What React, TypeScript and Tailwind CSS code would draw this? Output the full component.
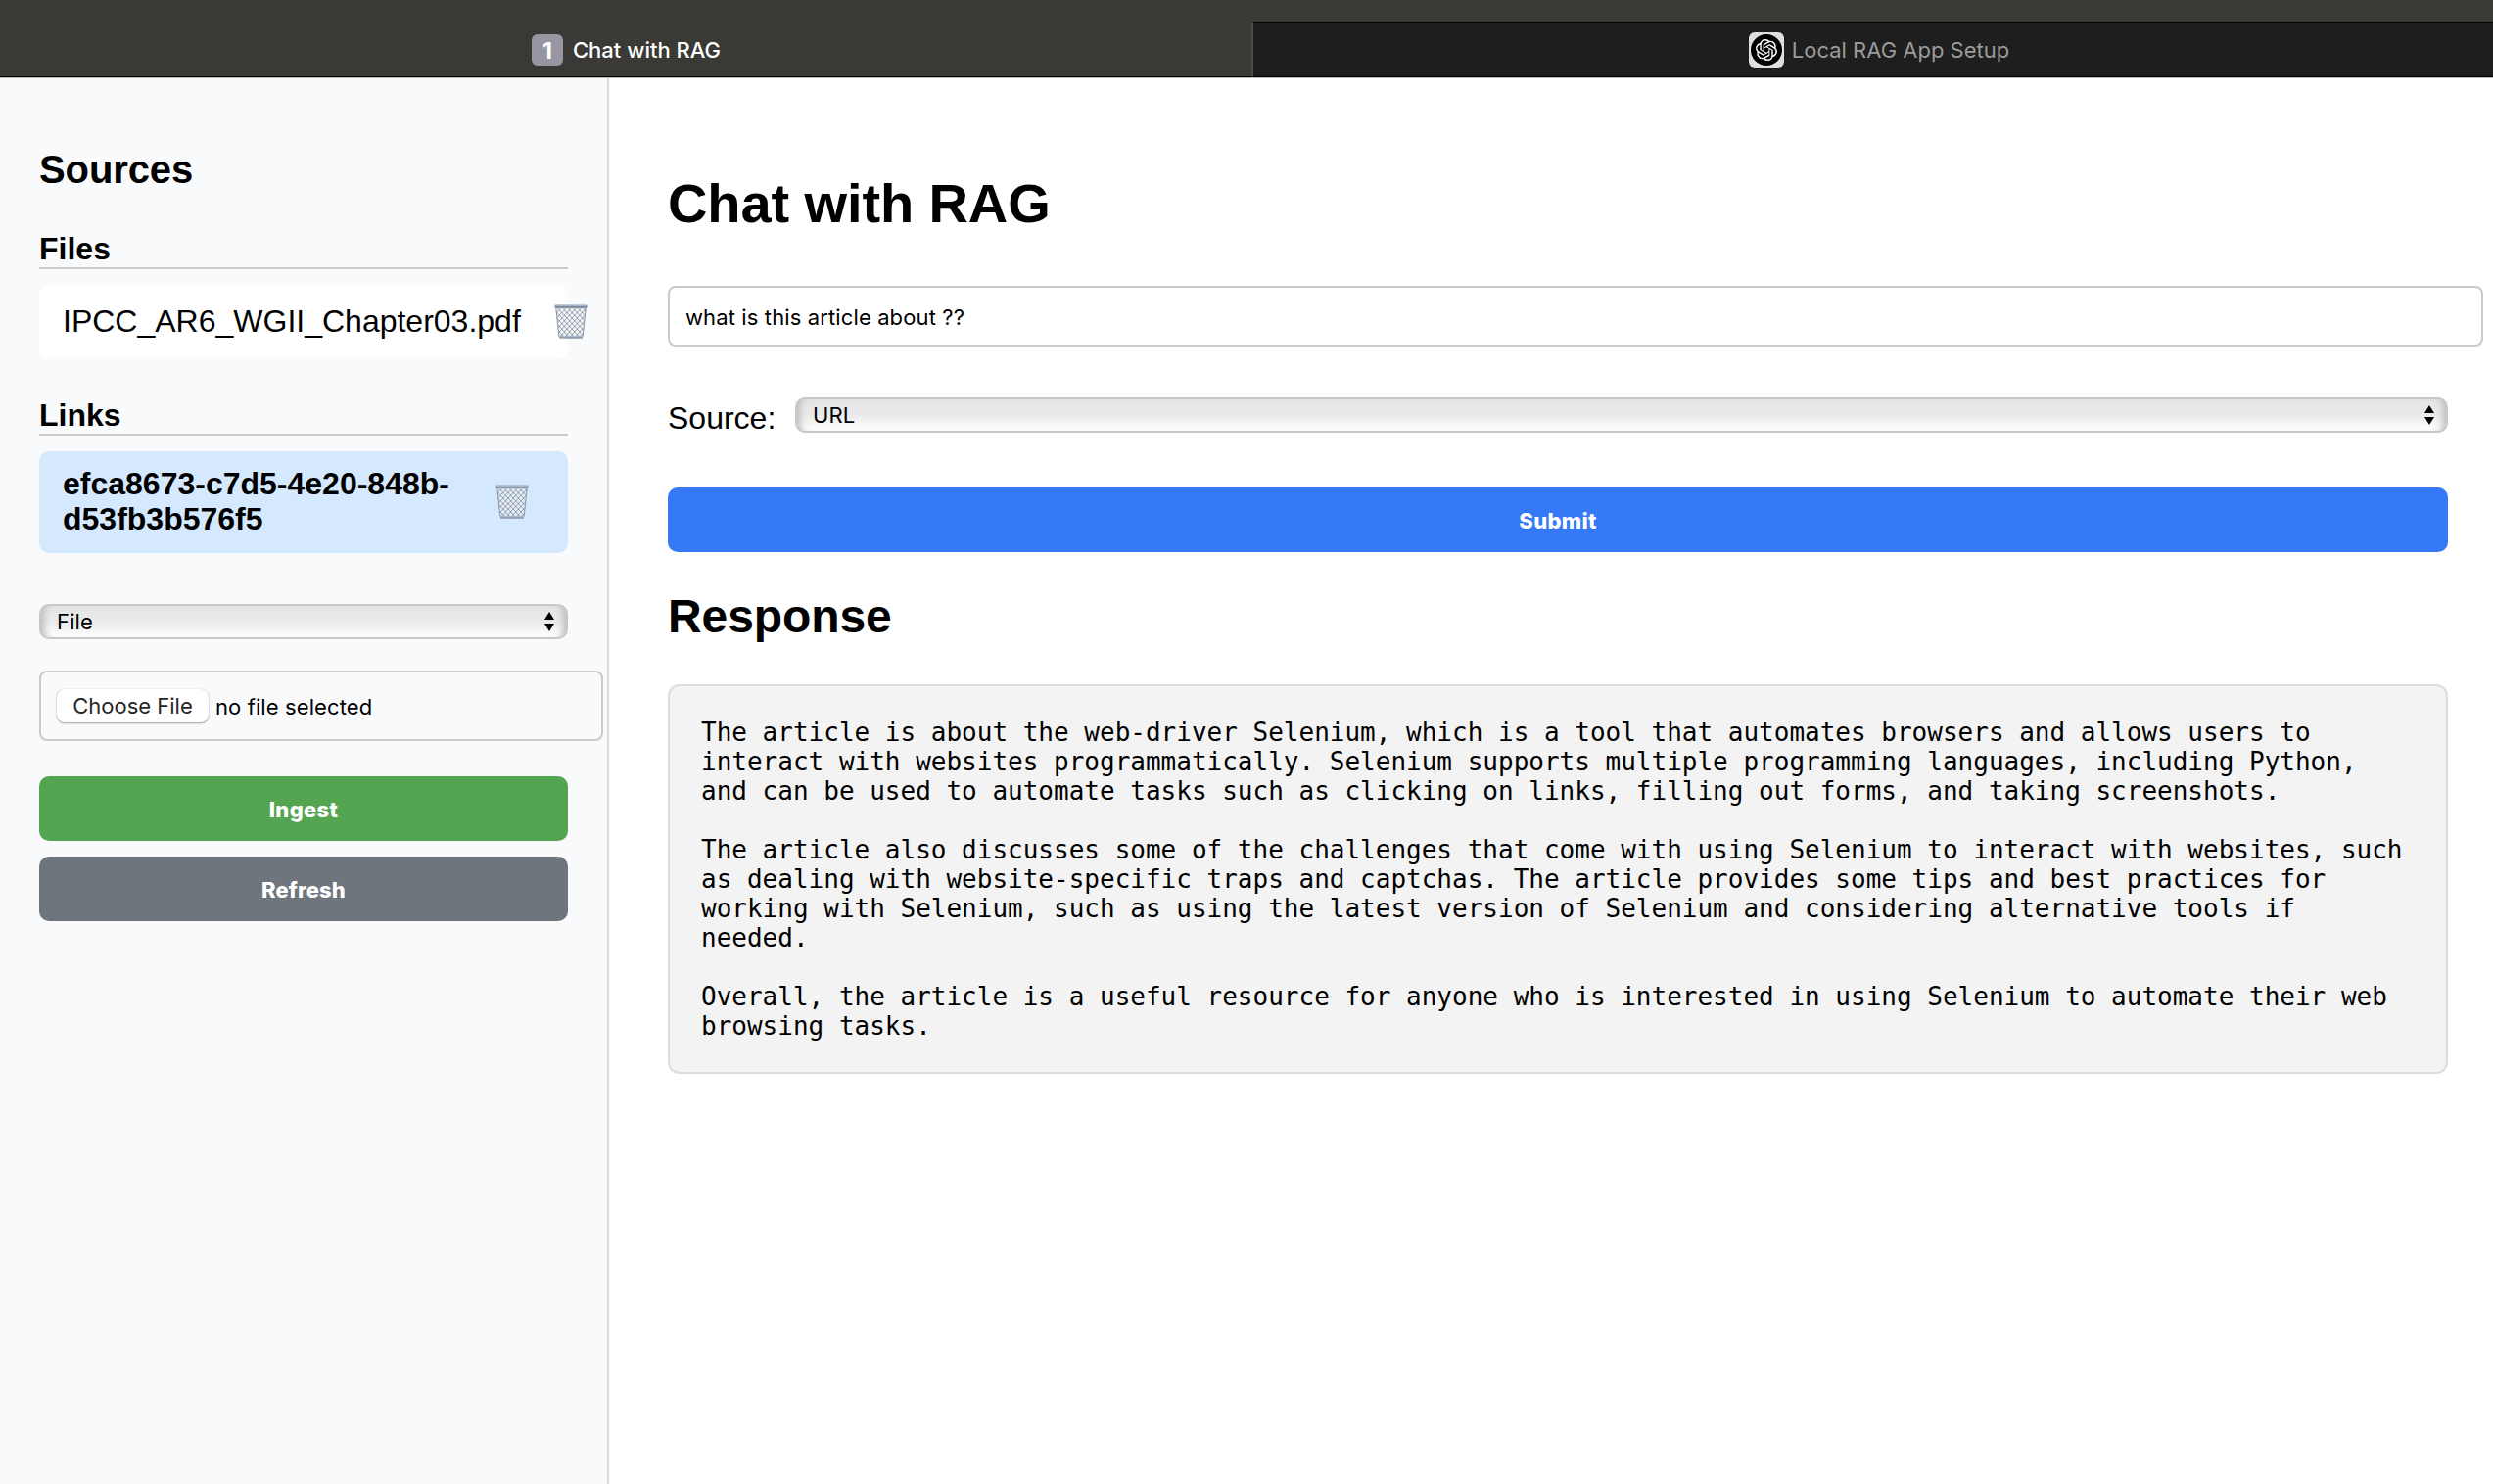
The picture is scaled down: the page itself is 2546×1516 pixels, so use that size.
import type { ReactNode } from 'react';

const RESPONSE = [
  'The article is about the web-driver Selenium, which is a tool that automates browsers and allows users to interact with websites programmatically. Selenium supports multiple programming languages, including Python, and can be used to automate tasks such as clicking on links, filling out forms, and taking screenshots.',
  'The article also discusses some of the challenges that come with using Selenium to interact with websites, such as dealing with website-specific traps and captchas. The article provides some tips and best practices for working with Selenium, such as using the latest version of Selenium and considering alternative tools if needed.',
  'Overall, the article is a useful resource for anyone who is interested in using Selenium to automate their web browsing tasks.',
].join('\n\n');

function OpenAiLogo() {
  return (
    <span className="flex size-9 items-center justify-center rounded-md bg-[#dfdfdf]">
      <span className="flex size-8 items-center justify-center rounded-full bg-black">
        <svg viewBox="0 0 24 24" className="size-[22px] fill-white">
          <path d="M22.2819 9.8211a5.9847 5.9847 0 0 0-.5157-4.9108 6.0462 6.0462 0 0 0-6.5098-2.9A6.0651 6.0651 0 0 0 4.9807 4.1818a5.9847 5.9847 0 0 0-3.9977 2.9 6.0462 6.0462 0 0 0 .7427 7.0966 5.98 5.98 0 0 0 .511 4.9107 6.051 6.051 0 0 0 6.5146 2.9001A5.9847 5.9847 0 0 0 13.2599 24a6.0557 6.0557 0 0 0 5.7718-4.2058 5.9894 5.9894 0 0 0 3.9977-2.9001 6.0557 6.0557 0 0 0-.7475-7.0729zm-9.022 12.6081a4.4755 4.4755 0 0 1-2.8764-1.0408l.1419-.0804 4.7783-2.7582a.7948.7948 0 0 0 .3927-.6813v-6.7369l2.02 1.1686a.071.071 0 0 1 .038.052v5.5826a4.504 4.504 0 0 1-4.4945 4.4944zm-9.6607-4.1254a4.4708 4.4708 0 0 1-.5346-3.0137l.142.0852 4.783 2.7582a.7712.7712 0 0 0 .7806 0l5.8428-3.3685v2.3324a.0804.0804 0 0 1-.0332.0615L9.74 19.9502a4.4992 4.4992 0 0 1-6.1408-1.6464zM2.3408 7.8956a4.485 4.485 0 0 1 2.3655-1.9728V11.6a.7664.7664 0 0 0 .3879.6765l5.8144 3.3543-2.0201 1.1685a.0757.0757 0 0 1-.071 0l-4.8303-2.7865A4.504 4.504 0 0 1 2.3408 7.872zm16.5963 3.8558L13.1038 8.364 15.1192 7.2a.0757.0757 0 0 1 .071 0l4.8303 2.7913a4.4944 4.4944 0 0 1-.6765 8.1042v-5.6772a.79.79 0 0 0-.407-.667zm2.0107-3.0231l-.142-.0852-4.7735-2.7818a.7759.7759 0 0 0-.7854 0L9.409 9.2297V6.8974a.0662.0662 0 0 1 .0284-.0615l4.8303-2.7866a4.4992 4.4992 0 0 1 6.6802 4.66zM8.3065 12.863l-2.02-1.1638a.0804.0804 0 0 1-.038-.0567V6.0742a4.4992 4.4992 0 0 1 7.3757-3.4537l-.142.0805L8.704 5.459a.7948.7948 0 0 0-.3927.6813zm1.0976-2.3654l2.602-1.4998 2.6069 1.4998v2.9994l-2.5974 1.4997-2.6067-1.4997Z" />
        </svg>
      </span>
    </span>
  );
}

function WireBasket() {
  return (
    <svg viewBox="0 0 34 35" className="h-[35px] w-[34px]" fill="none">
      <defs>
        <pattern id="mesh" width="5.2" height="5.6" patternUnits="userSpaceOnUse">
          <path d="M0 0L5.2 5.600M5.2 0L0 5.600" stroke="#89919b" strokeWidth="0.85" />
        </pattern>
      </defs>
      <path d="M1.2 2.5h31.6L29 33.5H5z" fill="#eef2f7" fillOpacity="0.6" />
      <path d="M1.2 2.5h31.6L29 33.5H5z" fill="url(#mesh)" />
      <path d="M1.8 3.5L4.8 32.5M32.2 3.5L29.2 32.5" stroke="#8d96a1" strokeWidth="1" />
      <path d="M4.6 31.2c6 .9 18.800 .9 24.800 0l-.5 2.900c-5 .8-18.800 .8-23.800 0z" fill="#a9b9cd" />
      <path d="M5 34h24" stroke="#7b8491" strokeWidth="1" />
      <rect x="0.3" y="0.6" width="33.400" height="2.800" rx="1.2" fill="#8a9db2" />
      <path d="M1 1.2h32" stroke="#b9c9da" strokeWidth="0.8" />
      <path d="M1 3.100h32" stroke="#626c78" strokeWidth="0.8" />
    </svg>
  );
}

function SourceItem({ name, selected = false }: { name: string; selected?: boolean }) {
  return (
    <div
      className={
        selected
          ? 'mt-4 flex h-[104px] items-center justify-between rounded-[10px] bg-[#d5e9fe] px-6 font-bold'
          : 'mt-4 flex h-[76px] items-center justify-between rounded-[10px] bg-white px-6'
      }
    >
      <span className="pb-0.5 text-[32px] leading-9">{name}</span>
      <button className="ml-4 shrink-0 pr-4 pb-px pl-[18px]" aria-label="Delete">
        <WireBasket />
      </button>
    </div>
  );
}

function GroupHeading({ children }: { children: ReactNode }) {
  return (
    <h3 className="h-[39px] border-b-2 border-[#cacacc] text-[32px] leading-9 font-bold">{children}</h3>
  );
}

function Select({ value }: { value: string }) {
  return (
    <div className="flex h-9 flex-1 rounded-[10px] border-2 border-[#c8c8c8] bg-linear-to-b from-[#e5e5e5] via-[#eaeaea] to-white">
      <div className="flex flex-1 items-center justify-between rounded-lg pr-3 pl-4 shadow-[inset_9px_0_7px_-6px_#bdbdbd,inset_-9px_0_7px_-6px_#bdbdbd] font-['Inter',sans-serif] text-[22px] leading-7 tracking-[0.15px]">
        <span>{value}</span>
        <svg viewBox="0 0 10 20" className="h-5 w-2.5 fill-black">
          <path d="M5 0l5 8H0zM5 20l5-8H0z" />
        </svg>
      </div>
    </div>
  );
}

export default function App() {
  return (
    <div className="flex h-[1516px] w-[2546px] flex-col overflow-hidden bg-white font-['Liberation_Sans',sans-serif] text-black">
      <header className="flex h-20 border-b border-[#bdbdbd] bg-[#3a3936] font-['Inter',sans-serif] text-[22px] leading-7">
        <div className="flex w-[1278px] items-center justify-center gap-2.5 border-b border-black pt-6 pl-px">
          <span className="flex size-8 items-center justify-center rounded-md bg-[#9796a2] pt-px text-[23px] font-bold text-white">1</span>
          <span className="font-medium text-white">Chat with RAG</span>
        </div>
        <div className="mt-[22px] flex flex-1 items-center justify-center gap-2 border-y border-l-2 border-y-black border-l-[#4b4b4a] bg-[#1e1e1e] pt-px pl-3">
          <OpenAiLogo />
          <span className="text-[#9b9b9b]">Local RAG App Setup</span>
        </div>
      </header>

      <div className="flex flex-1">
        <aside className="flex w-[622px] shrink-0 flex-col border-r-2 border-[#dcdcde] bg-[#f9fafc] pt-[70px] pr-10 pl-10">
          <h2 className="text-[40px] leading-[46px] font-bold tracking-[-0.1px]">Sources</h2>

          <section className="mt-10">
            <GroupHeading>Files</GroupHeading>
            <SourceItem name="IPCC_AR6_WGII_Chapter03.pdf" />
          </section>

          <section className="mt-[39px]">
            <GroupHeading>Links</GroupHeading>
            <SourceItem name="efca8673-c7d5-4e20-848b-d53fb3b576f5" selected />
          </section>

          <div className="mt-[52px] flex">
            <Select value="File" />
          </div>

          <div className="mt-8 flex h-[72px] w-[576px] items-center gap-[7px] rounded-lg border-2 border-[#cacacc] pl-4 font-['Inter',sans-serif] text-[22px] leading-7">
            <button className="h-[34px] w-[155px] rounded-lg bg-white text-[#262626] shadow-[0_1px_2px_rgba(0,0,0,0.35),0_0_1px_rgba(0,0,0,0.25)]">
              Choose File
            </button>
            <span className="pt-0.5 tracking-[0.1px]">no file selected</span>
          </div>

          <button className="mt-9 h-[66px] rounded-[10px] bg-[#54a551] pt-0.5 font-['Inter',sans-serif] text-[22px] font-extrabold tracking-[0.35px] text-white">
            Ingest
          </button>
          <button className="mt-4 h-[66px] rounded-[10px] bg-[#6e757d] pt-0.5 font-['Inter',sans-serif] text-[22px] font-extrabold tracking-[0.15px] text-white">
            Refresh
          </button>
        </aside>

        <main className="flex min-w-0 flex-1 flex-col pt-24 pr-[46px] pl-[60px]">
          <h1 className="text-[56px] leading-[64px] font-bold tracking-[-0.1px]">Chat with RAG</h1>

          <div className="mt-[52px] flex h-[62px] w-[1854px] items-center rounded-lg border-2 border-[#cacaca] px-4 pt-px font-['Inter',sans-serif] text-[22px] leading-7 tracking-[0.12px]">
            what is this article about ??
          </div>

          <div className="mt-[52px] flex h-9 items-center">
            <label className="mr-5 w-[110px] pt-1.5 text-[32px] leading-9">Source:</label>
            <Select value="URL" />
          </div>

          <button className="mt-14 h-[66px] rounded-[10px] bg-[#3579f7] pt-0.5 font-['Inter',sans-serif] text-[22px] font-extrabold tracking-[0.3px] text-white">
            Submit
          </button>

          <h2 className="mt-[38px] text-5xl leading-[56px] font-bold tracking-[-0.1px]">Response</h2>

          <pre className="mt-[41px] rounded-xl border-2 border-[#dcdcdc] bg-[#f3f3f3] p-8 font-['DejaVu_Sans_Mono',monospace] text-[26px] leading-[30px] whitespace-pre-wrap">
            {RESPONSE}
          </pre>
        </main>
      </div>
    </div>
  );
}
